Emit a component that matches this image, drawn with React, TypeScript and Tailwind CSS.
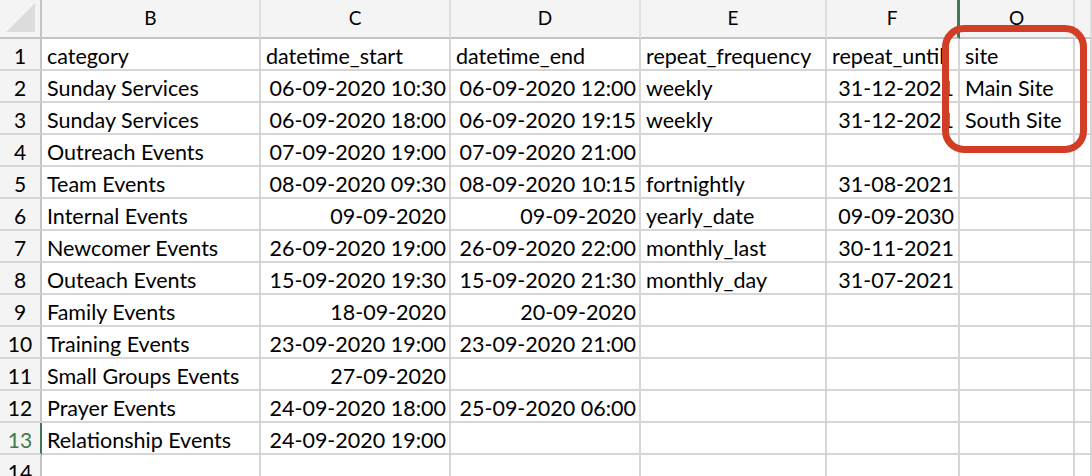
import React from "react";

type Row = {
  n: number;
  cat: string;
  start: string;
  end: string;
  freq: string;
  until: string;
  site: string;
};

const rows: Row[] = [
  { n: 1, cat: "category", start: "datetime_start", end: "datetime_end", freq: "repeat_frequency", until: "repeat_until", site: "site" },
  { n: 2, cat: "Sunday Services", start: "06-09-2020 10:30", end: "06-09-2020 12:00", freq: "weekly", until: "31-12-2021", site: "Main Site" },
  { n: 3, cat: "Sunday Services", start: "06-09-2020 18:00", end: "06-09-2020 19:15", freq: "weekly", until: "31-12-2021", site: "South Site" },
  { n: 4, cat: "Outreach Events", start: "07-09-2020 19:00", end: "07-09-2020 21:00", freq: "", until: "", site: "" },
  { n: 5, cat: "Team Events", start: "08-09-2020 09:30", end: "08-09-2020 10:15", freq: "fortnightly", until: "31-08-2021", site: "" },
  { n: 6, cat: "Internal Events", start: "09-09-2020", end: "09-09-2020", freq: "yearly_date", until: "09-09-2030", site: "" },
  { n: 7, cat: "Newcomer Events", start: "26-09-2020 19:00", end: "26-09-2020 22:00", freq: "monthly_last", until: "30-11-2021", site: "" },
  { n: 8, cat: "Outeach Events", start: "15-09-2020 19:30", end: "15-09-2020 21:30", freq: "monthly_day", until: "31-07-2021", site: "" },
  { n: 9, cat: "Family Events", start: "18-09-2020", end: "20-09-2020", freq: "", until: "", site: "" },
  { n: 10, cat: "Training Events", start: "23-09-2020 19:00", end: "23-09-2020 21:00", freq: "", until: "", site: "" },
  { n: 11, cat: "Small Groups Events", start: "27-09-2020", end: "", freq: "", until: "", site: "" },
  { n: 12, cat: "Prayer Events", start: "24-09-2020 18:00", end: "25-09-2020 06:00", freq: "", until: "", site: "" },
  { n: 13, cat: "Relationship Events", start: "24-09-2020 19:00", end: "", freq: "", until: "", site: "" },
  { n: 14, cat: "", start: "", end: "", freq: "", until: "", site: "" },
];

const cols = "grid grid-cols-[42px_219px_190px_190px_186px_133px_115px_1fr]";

const cell = "h-[32px] border-r-2 border-b-2 border-[#d6d6d6] overflow-hidden whitespace-nowrap flex items-end text-[21.5px] leading-[26px] text-black";

export default function App() {
  const headers = ["B", "C", "D", "E", "F", "O", ""];
  return (
    <div className="relative w-[1092px] h-[476px] overflow-hidden bg-white font-['Lato',sans-serif]">
      <div className={`${cols} bg-[#f4f4f4]`}>
        <div className="h-[39px] border-r-2 border-b-2 border-[#c4c4c4] flex items-end justify-end p-[5px]">
          <svg width="29" height="29" viewBox="0 0 29 29">
            <polygon points="29,0 29,29 0,29" fill="#dcdcdc" />
          </svg>
        </div>
        {headers.map((h, i) => (
          <div
            key={i}
            className={`h-[39px] border-b-2 border-[#c4c4c4] flex items-center justify-center text-[19px] text-black ${
              i === 4 ? "border-r-[3px] border-r-[#3d7a52]" : "border-r-2 border-r-[#dedede]"
            }`}
          >
            {h}
          </div>
        ))}
      </div>
      {rows.map((r) => (
        <div key={r.n} className={cols}>
          <div
            className={`h-[32px] border-r-2 border-b-2 border-b-[#d6d6d6] flex items-end justify-center text-[21px] leading-[26px] bg-[#f4f4f4] ${
              r.n === 13 ? "text-[#3d7a52] border-r-[#3d7a52]" : "text-black border-r-[#c4c4c4]"
            }`}
          >
            {r.n}
          </div>
          <div className={`${cell} pl-[5px]`}>{r.cat}</div>
          <div className={`${cell} justify-end pr-[3px] ${r.n === 1 ? "!justify-start pl-[5px]" : ""}`}>{r.start}</div>
          <div className={`${cell} justify-end pr-[3px] ${r.n === 1 ? "!justify-start pl-[5px]" : ""}`}>{r.end}</div>
          <div className={`${cell} pl-[5px]`}>{r.freq}</div>
          <div className={`${cell} justify-end pr-[4px] ${r.n === 1 ? "!justify-start pl-[5px]" : ""}`}>{r.until}</div>
          <div className={`${cell} pl-[5px]`}>{r.site}</div>
          <div className={cell}></div>
        </div>
      ))}
      <div className="absolute left-[942px] top-[25px] w-[145px] h-[128px] rounded-[22px] border-[7px] border-[#d33d25]" />
    </div>
  );
}
